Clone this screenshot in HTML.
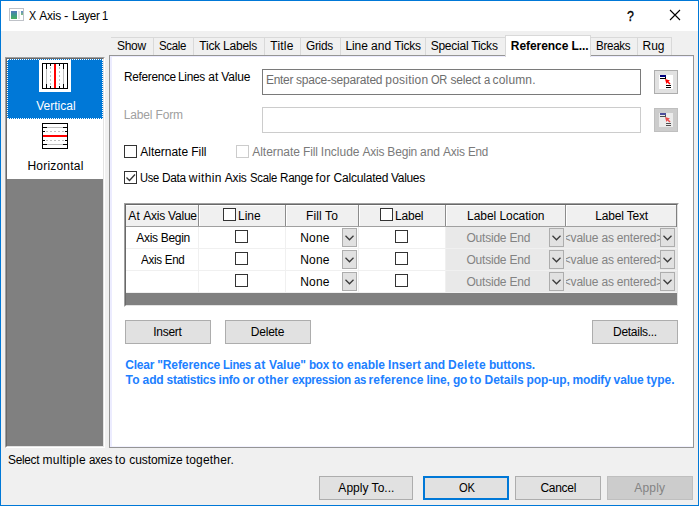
<!DOCTYPE html>
<html><head><meta charset="utf-8"><title>X Axis - Layer 1</title>
<style>
html,body{margin:0;padding:0;}
body{width:699px;height:506px;overflow:hidden;background:#f0f0f0;position:relative;font-family:"Liberation Sans",sans-serif;font-size:12px;}
.a{position:absolute;box-sizing:border-box;}
.t{position:absolute;transform-origin:0 0;white-space:nowrap;line-height:16px;height:16px;font-size:12px;}
.btn{position:absolute;box-sizing:border-box;background:#e1e1e1;border:1px solid #adadad;}
.cb{position:absolute;box-sizing:border-box;width:13px;height:13px;background:#fff;border:1px solid #333;}
.dd{position:absolute;box-sizing:border-box;width:15px;height:19px;background:#e1e1e1;border:1px solid #adadad;}
.dd svg{position:absolute;left:1.5px;top:6px;}
</style></head><body>
<!-- window frame -->
<div class="a" style="left:0;top:0;width:699px;height:506px;border:1px solid #0078d7;"></div>
<!-- title bar -->
<div class="a" style="left:1px;top:1px;width:697px;height:30px;background:#fff;"></div>
<!-- app icon -->
<div class="a" style="left:9px;top:8px;width:15px;height:13px;border:1px solid #bfc2c8;background:#fff;"></div>
<div class="a" style="left:11px;top:11px;width:6px;height:8px;background:linear-gradient(180deg,#5577bb,#3f9a8a 50%,#4cae5c);"></div>
<div class="a" style="left:18px;top:11px;width:2px;height:8px;background:#e4e4e4;"></div>
<div class="a" style="left:21px;top:11px;width:2px;height:4px;background:linear-gradient(180deg,#6688cc,#7cc07c);"></div>
<!-- ? and X -->

<svg class="a" style="left:669px;top:9px;" width="12" height="12" viewBox="0 0 12 12"><path d="M1 1 L11 11 M11 1 L1 11" stroke="#000" stroke-width="1.1" fill="none"/></svg>

<!-- left list box -->
<div class="a" style="left:5px;top:57px;width:100px;height:391px;background:#808080;border:1px solid;border-color:#a0a0a0 #fff #fff #a0a0a0;"></div>
<div class="a" style="left:6px;top:58px;width:98px;height:389px;background:#808080;border:1px solid;border-color:#696969 #e3e3e3 #e3e3e3 #696969;"></div>
<div class="a" style="left:7px;top:59px;width:96px;height:60px;background:#0078d7;border:1px dotted #fff;"></div>
<div class="a" style="left:7px;top:119px;width:96px;height:60px;background:#fff;"></div>
<!-- vertical icon -->
<div class="a" style="left:39px;top:60px;width:32px;height:32px;background:#fff;"></div>
<svg class="a" style="left:39px;top:60px;" width="32" height="32" viewBox="0 0 32 32" shape-rendering="crispEdges"><rect x="3.5" y="3.5" width="25" height="25" fill="#fff" stroke="#000" stroke-width="1"/><rect x="7" y="4" width="1" height="24" fill="#c0c0c0"/><rect x="7" y="4" width="1" height="5" fill="#000"/><rect x="7" y="24" width="1" height="4" fill="#000"/><rect x="24" y="4" width="1" height="24" fill="#c0c0c0"/><rect x="24" y="4" width="1" height="5" fill="#000"/><rect x="24" y="24" width="1" height="4" fill="#000"/><rect x="11" y="7" width="1" height="2" fill="#c0c0c0"/><rect x="11" y="11" width="1" height="2" fill="#c0c0c0"/><rect x="11" y="15" width="1" height="2" fill="#c0c0c0"/><rect x="11" y="19" width="1" height="2" fill="#c0c0c0"/><rect x="11" y="23" width="1" height="2" fill="#c0c0c0"/><rect x="11" y="4" width="1" height="2" fill="#000"/><rect x="11" y="26" width="1" height="2" fill="#000"/><rect x="20" y="7" width="1" height="2" fill="#c0c0c0"/><rect x="20" y="11" width="1" height="2" fill="#c0c0c0"/><rect x="20" y="15" width="1" height="2" fill="#c0c0c0"/><rect x="20" y="19" width="1" height="2" fill="#c0c0c0"/><rect x="20" y="23" width="1" height="2" fill="#c0c0c0"/><rect x="20" y="4" width="1" height="2" fill="#000"/><rect x="20" y="26" width="1" height="2" fill="#000"/><rect x="15" y="4" width="2" height="24" fill="#f00"/></svg>
<!-- horizontal icon -->
<svg class="a" style="left:39px;top:120px;" width="32" height="32" viewBox="0 0 32 32" shape-rendering="crispEdges"><rect x="3.5" y="3.5" width="25" height="25" fill="#fff" stroke="#000" stroke-width="1"/><rect y="7" x="4" height="1" width="24" fill="#c0c0c0"/><rect y="7" x="4" height="1" width="4" fill="#000"/><rect y="7" x="24" height="1" width="4" fill="#000"/><rect y="24" x="4" height="1" width="24" fill="#c0c0c0"/><rect y="24" x="4" height="1" width="4" fill="#000"/><rect y="24" x="24" height="1" width="4" fill="#000"/><rect y="11" x="7" height="1" width="2" fill="#c0c0c0"/><rect y="11" x="11" height="1" width="2" fill="#c0c0c0"/><rect y="11" x="15" height="1" width="2" fill="#c0c0c0"/><rect y="11" x="19" height="1" width="2" fill="#c0c0c0"/><rect y="11" x="23" height="1" width="2" fill="#c0c0c0"/><rect y="11" x="4" height="1" width="2" fill="#000"/><rect y="11" x="26" height="1" width="2" fill="#000"/><rect y="20" x="7" height="1" width="2" fill="#c0c0c0"/><rect y="20" x="11" height="1" width="2" fill="#c0c0c0"/><rect y="20" x="15" height="1" width="2" fill="#c0c0c0"/><rect y="20" x="19" height="1" width="2" fill="#c0c0c0"/><rect y="20" x="23" height="1" width="2" fill="#c0c0c0"/><rect y="20" x="4" height="1" width="2" fill="#000"/><rect y="20" x="26" height="1" width="2" fill="#000"/><rect y="15" x="4" height="2" width="24" fill="#f00"/></svg>

<!-- tab strip -->
<div class="a" style="left:111px;top:37px;width:561px;height:19px;border-top:1px solid #d9d9d9;border-right:1px solid #d9d9d9;background:#f0f0f0;"></div>
<div class="a" style="left:153px;top:38px;width:1px;height:17px;background:#d9d9d9;"></div>
<div class="a" style="left:193px;top:38px;width:1px;height:17px;background:#d9d9d9;"></div>
<div class="a" style="left:264px;top:38px;width:1px;height:17px;background:#d9d9d9;"></div>
<div class="a" style="left:300px;top:38px;width:1px;height:17px;background:#d9d9d9;"></div>
<div class="a" style="left:340px;top:38px;width:1px;height:17px;background:#d9d9d9;"></div>
<div class="a" style="left:425px;top:38px;width:1px;height:17px;background:#d9d9d9;"></div>
<div class="a" style="left:637px;top:38px;width:1px;height:17px;background:#d9d9d9;"></div>
<!-- tab panel -->
<div class="a" style="left:109px;top:55px;width:585px;height:393px;background:#fff;border:1px solid #959595;box-shadow:inset 2px 1px 0 #ececff, inset 0 -1px 0 #f2f2ff;"></div>
<!-- selected tab -->
<div class="a" style="left:505px;top:35px;width:86px;height:22px;background:#fff;border:1px solid #d9d9d9;border-bottom:none;"></div>

<!-- text boxes -->
<div class="a" style="left:262px;top:69px;width:379px;height:26px;background:#fff;border:1px solid #7a7a7a;"></div>
<div class="a" style="left:262px;top:107px;width:379px;height:26px;background:#fff;border:1px solid #cccccc;"></div>
<!-- small buttons -->
<div class="btn" style="left:654px;top:70px;width:24px;height:24px;"></div>
<svg class="a" style="left:659px;top:75px;" width="14" height="14" viewBox="0 0 14 14" shape-rendering="crispEdges">
<rect width="14" height="14" fill="#fff"/><rect x="1" y="0" width="6" height="2" fill="#000080"/><rect x="1" y="3" width="6" height="1" fill="#000"/><rect x="6" y="2" width="1" height="1" fill="#000"/>
<path d="M6 4 L11 5.5 L9.4 6.4 L11.6 8.6 L10.4 9.6 L8.4 7.4 L7.4 9 Z" fill="#f00" shape-rendering="auto"/>
<rect x="7" y="10" width="5" height="1" fill="#000"/><rect x="7" y="12" width="5" height="1" fill="#000"/></svg>
<div class="btn" style="left:654px;top:108px;width:24px;height:24px;background:#cccccc;border-color:#bfbfbf;"></div>
<svg class="a" style="left:659px;top:113px;opacity:.62" width="14" height="14" viewBox="0 0 14 14" shape-rendering="crispEdges">
<rect width="14" height="14" fill="#fff"/><rect x="1" y="0" width="6" height="2" fill="#000080"/><rect x="1" y="3" width="6" height="1" fill="#000"/><rect x="6" y="2" width="1" height="1" fill="#000"/>
<path d="M6 4 L11 5.5 L9.4 6.4 L11.6 8.6 L10.4 9.6 L8.4 7.4 L7.4 9 Z" fill="#f00" shape-rendering="auto"/>
<rect x="7" y="10" width="5" height="1" fill="#000"/><rect x="7" y="12" width="5" height="1" fill="#000"/></svg>

<!-- checkboxes -->
<div class="cb" style="left:124px;top:145px;"></div>
<div class="cb" style="left:236px;top:145px;border-color:#cccccc;"></div>
<div class="cb" style="left:124px;top:171px;"></div>
<svg class="a" style="left:124px;top:171px;" width="13" height="13" viewBox="0 0 13 13"><path d="M2.5 6.5 L5.5 9.5 L11 3.5" fill="none" stroke="#333" stroke-width="1.3"/></svg>

<!-- table -->
<div class="a" style="left:124px;top:203px;width:555px;height:104px;background:#808080;border:1px solid;border-color:#a0a0a0 #fff #fff #a0a0a0;"></div>
<div class="a" style="left:125px;top:204px;width:553px;height:102px;background:#808080;border:1px solid;border-color:#696969 #e3e3e3 #e3e3e3 #696969;"></div>
<!-- header -->
<div class="a" style="left:126px;top:205px;width:550px;height:22px;background:#f0f0f0;border-bottom:1px solid #a0a0a0;border-top:1px solid #fff;"></div>
<div class="a" style="left:676px;top:205px;width:1px;height:22px;background:#808080;"></div>
<!-- rows -->
<div class="a" style="left:126px;top:227px;width:551px;height:66px;background:#fff;"></div>
<div class="a" style="left:446px;top:227px;width:231px;height:65px;background:#e9e9e9;"></div>
<div class="a" style="left:126px;top:292px;width:551px;height:1px;background:#f0f0f0;"></div>
<div class="a" style="left:126px;top:248px;width:551px;height:1px;background:#f0f0f0;"></div>
<div class="a" style="left:126px;top:270px;width:551px;height:1px;background:#f0f0f0;"></div>
<!-- column separators -->
<div class="a" style="left:198px;top:205px;width:2px;height:21px;background:#8c8c8c;border-right:1px solid #fff;"></div>
<div class="a" style="left:285px;top:205px;width:2px;height:21px;background:#8c8c8c;border-right:1px solid #fff;"></div>
<div class="a" style="left:358px;top:205px;width:2px;height:21px;background:#8c8c8c;border-right:1px solid #fff;"></div>
<div class="a" style="left:445px;top:205px;width:2px;height:21px;background:#8c8c8c;border-right:1px solid #fff;"></div>
<div class="a" style="left:565px;top:205px;width:2px;height:21px;background:#8c8c8c;border-right:1px solid #fff;"></div>
<div class="a" style="left:198px;top:227px;width:1px;height:65px;background:#f0f0f0;"></div>
<div class="a" style="left:285px;top:227px;width:1px;height:65px;background:#f0f0f0;"></div>
<div class="a" style="left:358px;top:227px;width:1px;height:65px;background:#f0f0f0;"></div>
<div class="a" style="left:445px;top:227px;width:1px;height:65px;background:#f0f0f0;"></div>
<!-- header checkboxes -->
<div class="cb" style="left:223px;top:208px;"></div>
<div class="cb" style="left:380px;top:208px;"></div>
<!-- row checkboxes -->
<div class="cb" style="left:235px;top:230px;"></div><div class="cb" style="left:235px;top:252px;"></div><div class="cb" style="left:235px;top:274px;"></div>
<div class="cb" style="left:395px;top:230px;"></div><div class="cb" style="left:395px;top:252px;"></div><div class="cb" style="left:395px;top:274px;"></div>
<!-- dropdowns -->
<div class="dd" style="left:342px;top:228px;"><svg width="9" height="6" viewBox="0 0 9 6"><path d="M0.5 0.8 L4.5 4.8 L8.5 0.8" fill="none" stroke="#3a3a3a" stroke-width="1.25"/></svg></div>
<div class="dd" style="left:549px;top:228px;"><svg width="9" height="6" viewBox="0 0 9 6"><path d="M0.5 0.8 L4.5 4.8 L8.5 0.8" fill="none" stroke="#3a3a3a" stroke-width="1.25"/></svg></div>
<div class="dd" style="left:660px;top:228px;"><svg width="9" height="6" viewBox="0 0 9 6"><path d="M0.5 0.8 L4.5 4.8 L8.5 0.8" fill="none" stroke="#3a3a3a" stroke-width="1.25"/></svg></div>
<div class="dd" style="left:342px;top:250px;"><svg width="9" height="6" viewBox="0 0 9 6"><path d="M0.5 0.8 L4.5 4.8 L8.5 0.8" fill="none" stroke="#3a3a3a" stroke-width="1.25"/></svg></div>
<div class="dd" style="left:549px;top:250px;"><svg width="9" height="6" viewBox="0 0 9 6"><path d="M0.5 0.8 L4.5 4.8 L8.5 0.8" fill="none" stroke="#3a3a3a" stroke-width="1.25"/></svg></div>
<div class="dd" style="left:660px;top:250px;"><svg width="9" height="6" viewBox="0 0 9 6"><path d="M0.5 0.8 L4.5 4.8 L8.5 0.8" fill="none" stroke="#3a3a3a" stroke-width="1.25"/></svg></div>
<div class="dd" style="left:342px;top:272px;"><svg width="9" height="6" viewBox="0 0 9 6"><path d="M0.5 0.8 L4.5 4.8 L8.5 0.8" fill="none" stroke="#3a3a3a" stroke-width="1.25"/></svg></div>
<div class="dd" style="left:549px;top:272px;"><svg width="9" height="6" viewBox="0 0 9 6"><path d="M0.5 0.8 L4.5 4.8 L8.5 0.8" fill="none" stroke="#3a3a3a" stroke-width="1.25"/></svg></div>
<div class="dd" style="left:660px;top:272px;"><svg width="9" height="6" viewBox="0 0 9 6"><path d="M0.5 0.8 L4.5 4.8 L8.5 0.8" fill="none" stroke="#3a3a3a" stroke-width="1.25"/></svg></div>

<!-- buttons -->
<div class="btn" style="left:125px;top:320px;width:86px;height:24px;"></div>
<div class="btn" style="left:225px;top:320px;width:86px;height:24px;"></div>
<div class="btn" style="left:592px;top:320px;width:86px;height:24px;"></div>
<div class="btn" style="left:319px;top:476px;width:94px;height:24px;"></div>
<div class="btn" style="left:423px;top:476px;width:86px;height:24px;border:2px solid #0078d7;"></div>
<div class="btn" style="left:515px;top:476px;width:86px;height:24px;"></div>
<div class="btn" style="left:607px;top:476px;width:86px;height:24px;background:#cccccc;border-color:#bfbfbf;"></div>

<span><span class="t" style="left:29.48px;top:8.00px;color:#000;letter-spacing:-0.300px;transform:scaleX(0.8934);">X</span> <span class="t" style="left:39.33px;top:8.00px;color:#000;letter-spacing:-0.252px;">Axis</span> <span class="t" style="left:63.95px;top:8.00px;color:#000;letter-spacing:0.500px;transform:scaleX(1.0942);">-</span> <span class="t" style="left:71.83px;top:8.00px;color:#000;letter-spacing:-0.300px;transform:scaleX(0.9664);">Layer</span> <span class="t" style="left:102.35px;top:8.00px;color:#000;letter-spacing:-0.300px;transform:scaleX(0.9250);">1</span></span>
<span class="t" style="left:626.63px;top:7.63px;color:#000;font-size:14px;-webkit-text-stroke:0.35px #000;letter-spacing:0.000px;transform:scaleX(0.8843);">?</span>
<span class="t" style="left:116.95px;top:38.00px;color:#000;letter-spacing:-0.295px;">Show</span>
<span class="t" style="left:158.99px;top:38.00px;color:#000;letter-spacing:-0.300px;transform:scaleX(0.9522);">Scale</span>
<span class="t" style="left:199.36px;top:38.00px;color:#000;letter-spacing:-0.230px;">Tick Labels</span>
<span class="t" style="left:270.36px;top:38.00px;color:#000;letter-spacing:0.197px;">Title</span>
<span class="t" style="left:305.94px;top:38.00px;color:#000;letter-spacing:-0.300px;transform:scaleX(0.9858);">Grids</span>
<span><span class="t" style="left:345.40px;top:38.00px;color:#000;letter-spacing:-0.066px;">Line</span> <span class="t" style="left:370.88px;top:38.00px;color:#000;letter-spacing:0.118px;">and</span> <span class="t" style="left:394.32px;top:38.00px;color:#000;letter-spacing:-0.212px;">Ticks</span></span>
<span class="t" style="left:430.65px;top:38.00px;color:#000;letter-spacing:-0.232px;">Special Ticks</span>
<span class="t" style="left:595.54px;top:38.00px;color:#000;letter-spacing:-0.300px;transform:scaleX(0.9641);">Breaks</span>
<span class="t" style="left:642.60px;top:38.00px;color:#000;letter-spacing:-0.112px;">Rug</span>
<span class="t" style="left:510.80px;top:38.00px;color:#000;font-weight:bold;letter-spacing:-0.061px;">Reference L...</span>
<span class="t" style="left:36.16px;top:98.00px;color:#fff;letter-spacing:0.016px;">Vertical</span>
<span class="t" style="left:27.50px;top:158.00px;color:#000;letter-spacing:0.198px;">Horizontal</span>
<span><span class="t" style="left:123.70px;top:69.00px;color:#000;letter-spacing:-0.300px;transform:scaleX(0.9833);">Reference</span> <span class="t" style="left:178.48px;top:69.00px;color:#000;letter-spacing:-0.300px;transform:scaleX(0.9892);">Lines</span> <span class="t" style="left:208.36px;top:69.00px;color:#000;letter-spacing:-0.028px;">at</span> <span class="t" style="left:221.31px;top:69.00px;color:#000;letter-spacing:-0.186px;">Value</span></span>
<span class="t" style="left:123.70px;top:107.00px;color:#a0a0a0;letter-spacing:-0.154px;">Label Form</span>
<span><span class="t" style="left:266.00px;top:72.00px;color:#6d6d6d;letter-spacing:-0.300px;transform:scaleX(0.9957);">Enter</span> <span class="t" style="left:296.08px;top:72.00px;color:#6d6d6d;letter-spacing:-0.211px;">space-separated</span> <span class="t" style="left:385.31px;top:72.00px;color:#6d6d6d;letter-spacing:0.217px;">position</span> <span class="t" style="left:431.43px;top:72.00px;color:#6d6d6d;letter-spacing:-0.300px;transform:scaleX(0.9219);">OR</span> <span class="t" style="left:450.48px;top:72.00px;color:#6d6d6d;letter-spacing:-0.213px;">select</span> <span class="t" style="left:483.57px;top:72.00px;color:#6d6d6d;letter-spacing:-0.300px;transform:scaleX(0.9418);">a</span> <span class="t" style="left:492.59px;top:72.00px;color:#6d6d6d;letter-spacing:0.154px;">column.</span></span>
<span class="t" style="left:140.37px;top:144.00px;color:#000;letter-spacing:-0.041px;">Alternate Fill</span>
<span><span class="t" style="left:252.27px;top:144.00px;color:#7a7a7a;letter-spacing:-0.040px;">Alternate</span> <span class="t" style="left:302.92px;top:144.00px;color:#7a7a7a;letter-spacing:-0.107px;">Fill</span> <span class="t" style="left:320.80px;top:144.00px;color:#7a7a7a;letter-spacing:0.005px;">Include</span> <span class="t" style="left:362.51px;top:144.00px;color:#7a7a7a;letter-spacing:-0.205px;">Axis</span> <span class="t" style="left:387.34px;top:144.00px;color:#7a7a7a;letter-spacing:-0.181px;">Begin</span> <span class="t" style="left:420.12px;top:144.00px;color:#7a7a7a;letter-spacing:-0.056px;">and</span> <span class="t" style="left:442.96px;top:144.00px;color:#7a7a7a;letter-spacing:-0.205px;">Axis</span> <span class="t" style="left:467.79px;top:144.00px;color:#7a7a7a;letter-spacing:-0.300px;transform:scaleX(0.9709);">End</span></span>
<span><span class="t" style="left:140.00px;top:170.00px;color:#000;letter-spacing:-0.300px;transform:scaleX(0.9268);">Use</span> <span class="t" style="left:161.94px;top:170.00px;color:#000;letter-spacing:-0.300px;transform:scaleX(0.9906);">Data</span> <span class="t" style="left:188.86px;top:170.00px;color:#000;letter-spacing:0.370px;">within</span> <span class="t" style="left:224.76px;top:170.00px;color:#000;letter-spacing:-0.183px;">Axis</span> <span class="t" style="left:249.69px;top:170.00px;color:#000;letter-spacing:-0.300px;transform:scaleX(0.9437);">Scale</span> <span class="t" style="left:279.61px;top:170.00px;color:#000;letter-spacing:-0.300px;transform:scaleX(0.9714);">Range</span> <span class="t" style="left:315.51px;top:170.00px;color:#000;letter-spacing:0.314px;">for</span> <span class="t" style="left:333.46px;top:170.00px;color:#000;letter-spacing:-0.186px;">Calculated</span> <span class="t" style="left:391.29px;top:170.00px;color:#000;letter-spacing:-0.300px;transform:scaleX(0.9968);">Values</span></span>
<span><span class="t" style="left:128.27px;top:208.00px;color:#000;letter-spacing:0.293px;">At</span> <span class="t" style="left:143.18px;top:208.00px;color:#000;letter-spacing:-0.200px;">Axis</span> <span class="t" style="left:168.03px;top:208.00px;color:#000;letter-spacing:-0.197px;">Value</span></span>
<span class="t" style="left:238.00px;top:208.00px;color:#000;letter-spacing:-0.038px;">Line</span>
<span class="t" style="left:306.00px;top:208.00px;color:#000;letter-spacing:0.123px;">Fill To</span>
<span class="t" style="left:395.10px;top:208.00px;color:#000;letter-spacing:-0.231px;">Label</span>
<span class="t" style="left:467.00px;top:208.00px;color:#000;letter-spacing:-0.047px;">Label Location</span>
<span class="t" style="left:595.30px;top:208.00px;color:#000;letter-spacing:-0.178px;">Label Text</span>
<span class="t" style="left:136.27px;top:230.00px;color:#000;letter-spacing:-0.300px;">Axis Begin</span>
<span class="t" style="left:141.27px;top:252.00px;color:#000;letter-spacing:-0.300px;transform:scaleX(0.9683);">Axis End</span>
<span class="t" style="left:300.30px;top:230.00px;color:#000;letter-spacing:0.128px;">None</span>
<span class="t" style="left:466.50px;top:230.00px;color:#838383;letter-spacing:-0.222px;">Outside End</span>
<div class="a" style="left:566px;top:230.00px;width:94px;height:16px;overflow:hidden;"><span class="t" style="left:-2.23px;top:0px;color:#838383;letter-spacing:-0.197px;">&lt;value as entered&gt;</span></div>
<span class="t" style="left:300.30px;top:252.00px;color:#000;letter-spacing:0.128px;">None</span>
<span class="t" style="left:466.50px;top:252.00px;color:#838383;letter-spacing:-0.222px;">Outside End</span>
<div class="a" style="left:566px;top:252.00px;width:94px;height:16px;overflow:hidden;"><span class="t" style="left:-2.23px;top:0px;color:#838383;letter-spacing:-0.197px;">&lt;value as entered&gt;</span></div>
<span class="t" style="left:300.30px;top:274.00px;color:#000;letter-spacing:0.128px;">None</span>
<span class="t" style="left:466.50px;top:274.00px;color:#838383;letter-spacing:-0.222px;">Outside End</span>
<div class="a" style="left:566px;top:274.00px;width:94px;height:16px;overflow:hidden;"><span class="t" style="left:-2.23px;top:0px;color:#838383;letter-spacing:-0.197px;">&lt;value as entered&gt;</span></div>
<span class="t" style="left:153.26px;top:324.00px;color:#000;letter-spacing:-0.291px;">Insert</span>
<span class="t" style="left:250.80px;top:324.00px;color:#000;letter-spacing:-0.223px;">Delete</span>
<span class="t" style="left:613.00px;top:324.00px;color:#000;letter-spacing:-0.276px;">Details...</span>
<span><span class="t" style="left:125.19px;top:357.00px;color:#2080ff;font-weight:bold;letter-spacing:-0.211px;">Clear</span> <span class="t" style="left:157.17px;top:357.00px;color:#2080ff;font-weight:bold;letter-spacing:-0.078px;">"Reference</span> <span class="t" style="left:223.12px;top:357.00px;color:#2080ff;font-weight:bold;letter-spacing:-0.300px;transform:scaleX(0.9375);">Lines</span> <span class="t" style="left:254.10px;top:357.00px;color:#2080ff;font-weight:bold;letter-spacing:0.500px;transform:scaleX(1.0274);">at</span> <span class="t" style="left:269.08px;top:357.00px;color:#2080ff;font-weight:bold;letter-spacing:-0.012px;">Value"</span> <span class="t" style="left:309.05px;top:357.00px;color:#2080ff;font-weight:bold;letter-spacing:-0.300px;transform:scaleX(0.9776);">box</span> <span class="t" style="left:332.04px;top:357.00px;color:#2080ff;font-weight:bold;letter-spacing:0.332px;">to</span> <span class="t" style="left:347.03px;top:357.00px;color:#2080ff;font-weight:bold;letter-spacing:-0.007px;">enable</span> <span class="t" style="left:388.00px;top:357.00px;color:#2080ff;font-weight:bold;letter-spacing:0.048px;">Insert</span> <span class="t" style="left:423.97px;top:357.00px;color:#2080ff;font-weight:bold;letter-spacing:-0.120px;">and</span> <span class="t" style="left:447.95px;top:357.00px;color:#2080ff;font-weight:bold;letter-spacing:0.323px;">Delete</span> <span class="t" style="left:488.92px;top:357.00px;color:#2080ff;font-weight:bold;letter-spacing:-0.170px;">buttons.</span></span>
<span><span class="t" style="left:125.59px;top:372.00px;color:#2080ff;font-weight:bold;letter-spacing:0.109px;">To</span> <span class="t" style="left:142.59px;top:372.00px;color:#2080ff;font-weight:bold;letter-spacing:-0.115px;">add</span> <span class="t" style="left:166.59px;top:372.00px;color:#2080ff;font-weight:bold;letter-spacing:-0.300px;">statistics</span> <span class="t" style="left:218.59px;top:372.00px;color:#2080ff;font-weight:bold;letter-spacing:-0.250px;">info</span> <span class="t" style="left:242.59px;top:372.00px;color:#2080ff;font-weight:bold;letter-spacing:0.000px;">or</span> <span class="t" style="left:257.60px;top:372.00px;color:#2080ff;font-weight:bold;letter-spacing:0.200px;">other</span> <span class="t" style="left:291.60px;top:372.00px;color:#2080ff;font-weight:bold;letter-spacing:-0.300px;transform:scaleX(0.9772);">expression</span> <span class="t" style="left:353.60px;top:372.00px;color:#2080ff;font-weight:bold;letter-spacing:-0.300px;transform:scaleX(0.9405);">as</span> <span class="t" style="left:368.60px;top:372.00px;color:#2080ff;font-weight:bold;letter-spacing:0.106px;">reference</span> <span class="t" style="left:426.60px;top:372.00px;color:#2080ff;font-weight:bold;letter-spacing:-0.203px;">line,</span> <span class="t" style="left:452.60px;top:372.00px;color:#2080ff;font-weight:bold;letter-spacing:-0.300px;transform:scaleX(0.9949);">go</span> <span class="t" style="left:469.60px;top:372.00px;color:#2080ff;font-weight:bold;letter-spacing:0.336px;">to</span> <span class="t" style="left:484.60px;top:372.00px;color:#2080ff;font-weight:bold;letter-spacing:-0.051px;">Details</span> <span class="t" style="left:526.60px;top:372.00px;color:#2080ff;font-weight:bold;letter-spacing:-0.141px;">pop-up,</span> <span class="t" style="left:572.60px;top:372.00px;color:#2080ff;font-weight:bold;letter-spacing:-0.224px;">modify</span> <span class="t" style="left:613.60px;top:372.00px;color:#2080ff;font-weight:bold;letter-spacing:-0.138px;">value</span> <span class="t" style="left:646.60px;top:372.00px;color:#2080ff;font-weight:bold;letter-spacing:-0.003px;">type.</span></span>
<span><span class="t" style="left:8.26px;top:452.00px;color:#000;letter-spacing:-0.300px;transform:scaleX(0.9902);">Select</span> <span class="t" style="left:42.53px;top:452.00px;color:#000;letter-spacing:0.249px;">multiple</span> <span class="t" style="left:88.90px;top:452.00px;color:#000;letter-spacing:-0.300px;transform:scaleX(0.9597);">axes</span> <span class="t" style="left:115.11px;top:452.00px;color:#000;letter-spacing:0.500px;transform:scaleX(1.0066);">to</span> <span class="t" style="left:129.22px;top:452.00px;color:#000;letter-spacing:-0.067px;">customize</span> <span class="t" style="left:185.68px;top:452.00px;color:#000;letter-spacing:0.185px;">together.</span></span>
<span class="t" style="left:338.37px;top:480.00px;color:#000;letter-spacing:0.020px;">Apply To...</span>
<span class="t" style="left:458.54px;top:480.00px;color:#000;letter-spacing:-0.300px;transform:scaleX(0.9297);">OK</span>
<span class="t" style="left:540.44px;top:480.00px;color:#000;letter-spacing:-0.300px;">Cancel</span>
<span class="t" style="left:634.16px;top:480.00px;color:#838383;letter-spacing:0.223px;">Apply</span>
</body></html>
